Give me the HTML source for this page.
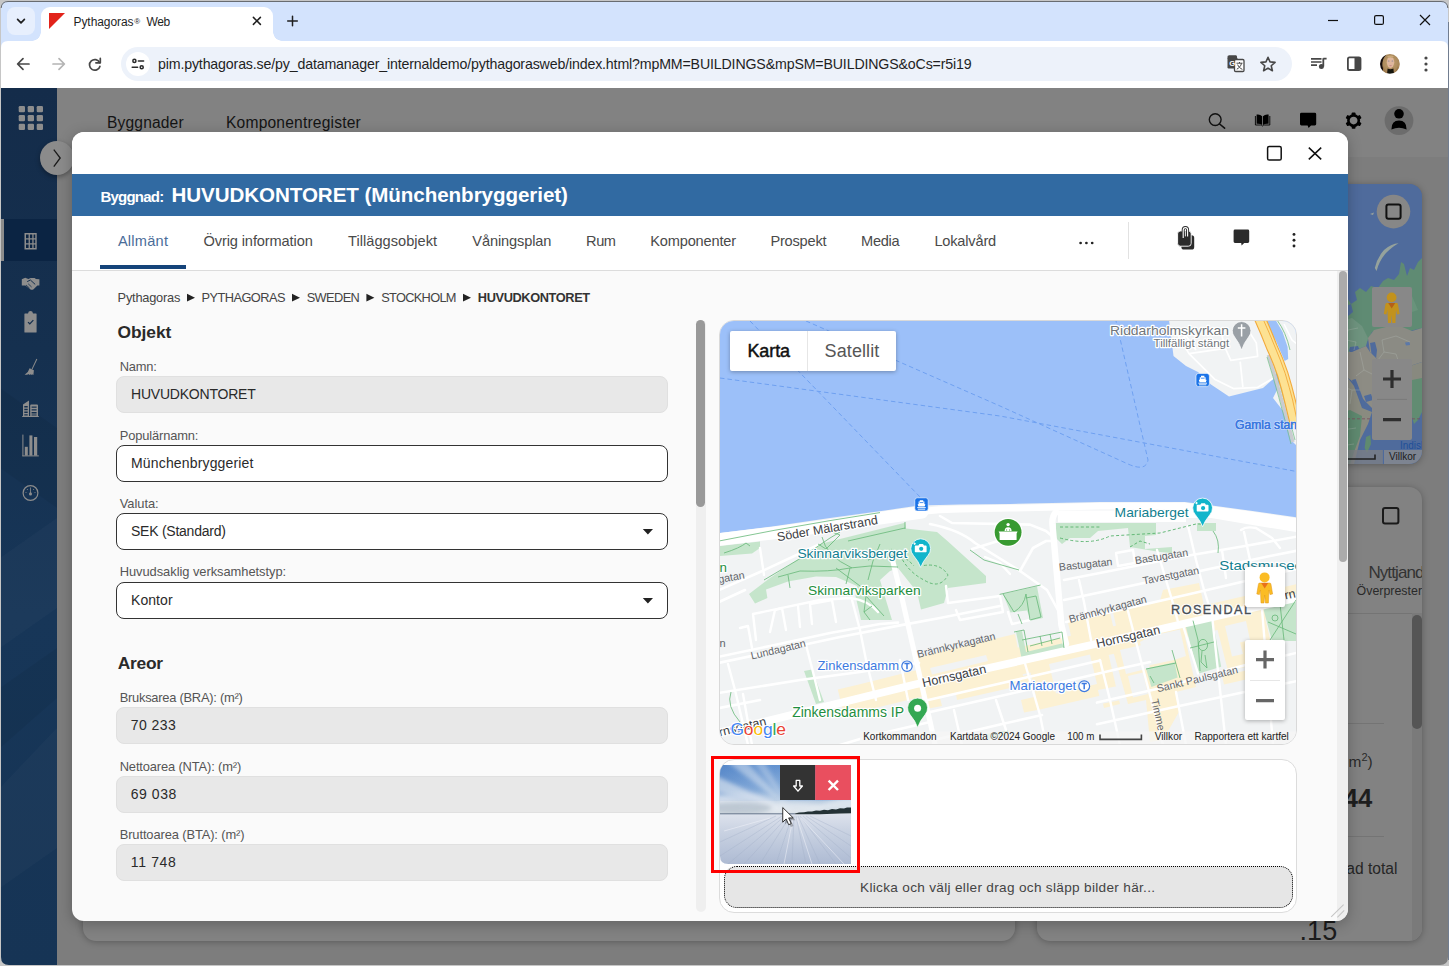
<!DOCTYPE html>
<html lang="sv">
<head>
<meta charset="utf-8">
<title>Pythagoras Web</title>
<style>
*{box-sizing:border-box;margin:0;padding:0}
html,body{width:1449px;height:966px;overflow:hidden;background:#808080;font-family:"Liberation Sans",sans-serif;color:#222}
.abs{position:absolute}
.t{position:absolute;white-space:nowrap;line-height:1}
#win{position:absolute;left:0;top:0;width:1449px;height:966px;overflow:hidden;background:#808080}
/* ---------- browser chrome ---------- */
#tabstrip{position:absolute;left:0;top:0;width:1449px;height:41px;background:#d3e3fd}
#tabsearch{position:absolute;left:7px;top:7px;width:28px;height:28px;border-radius:8px;background:#e7effd}
#tab{position:absolute;left:41px;top:7px;width:232px;height:34px;background:#fff;border-radius:9px 9px 0 0}
#tab:before,#tab:after{content:"";position:absolute;bottom:0;width:9px;height:9px}
#tab:before{left:-9px;background:radial-gradient(circle at 0 0,transparent 8.5px,#fff 9px)}
#tab:after{right:-9px;background:radial-gradient(circle at 100% 0,transparent 8.5px,#fff 9px)}
#tabtitle{position:absolute;left:73px;top:14px;font-size:12px;color:#1f1f1f;white-space:nowrap;letter-spacing:.1px}
#toolbar{position:absolute;left:0;top:41px;width:1449px;height:47px;background:#fff}
#urlpill{position:absolute;left:121px;top:47px;width:1171px;height:34px;border-radius:17px;background:#edf2fa}
#siteinfo{position:absolute;left:126px;top:52px;width:24px;height:24px;border-radius:12px;background:#fff}
#url{position:absolute;left:158px;top:56px;font-size:14px;color:#1f1f1f;white-space:nowrap;letter-spacing:.06px}
/* ---------- page behind modal ---------- */
#pgbg{position:absolute;left:0;top:88px;width:1449px;height:878px;background:#7d7d7d;overflow:hidden}
.card{position:absolute;background:#828282;border-radius:13px;box-shadow:0 1px 7px rgba(0,0,0,.28)}
#side{position:absolute;left:0;top:0;width:57px;height:878px;background:linear-gradient(180deg,#142c4a 0%,#15304f 30%,#173658 60%,#163455 100%)}
#side .act{position:absolute;left:0;top:131px;width:57px;height:42px;background:#0b2443}
#side .act:before{content:"";position:absolute;left:0;top:0;width:4px;height:42px;background:#8c8c8c}
#topnav{position:absolute;left:57px;top:0;width:1392px;height:69px;background:#828282}
.nav{position:absolute;top:26px;font-size:16px;color:#161616;white-space:nowrap}
/* ---------- modal ---------- */
#modal{position:absolute;left:72px;top:131.7px;width:1276px;height:789.4px;background:#fafafa;border-radius:12px;overflow:hidden;box-shadow:0 3px 14px rgba(0,0,0,.25)}
#mtop{position:absolute;left:0;top:0;width:1276px;height:43px;background:#fff}
#mtitle{position:absolute;left:0;top:42.3px;width:1276px;height:42px;background:#316aa2;color:#fff}
#mtabs{position:absolute;left:0;top:84.3px;width:1276px;height:55px;background:#fff;border-bottom:1px solid #dcdcdc}
#mc{position:absolute;left:0;top:0;width:0;height:0}
.fld{position:absolute;left:116px;width:552px;height:36.6px;border-radius:8px}
.fld.ro{background:#e8e8e8;border:1px solid #e0e0e0}
.fld.ed{background:#fff;border:1.3px solid #333}
</style>
</head>
<body>
<div id="win">

<!-- ================= BROWSER CHROME ================= -->
<div id="tabstrip"></div>
<div id="tabsearch"></div>
<div id="tab"></div>
<span class="t" style="left:73.5px;top:15.8px;font-size:12px;color:#1f1f1f;letter-spacing:-0.070px">Pythagoras</span><span class="t" style="left:134.2px;top:18.2px;font-size:8px;color:#1f1f1f">&#174;</span><span class="t" style="left:146.4px;top:15.8px;font-size:12px;color:#1f1f1f;letter-spacing:-0.356px">Web</span>
<div id="toolbar"></div>
<div id="urlpill"></div>
<div id="siteinfo"></div>
<span class="t" style="left:158.0px;top:56.6px;font-size:14.2px;color:#1f1f1f;letter-spacing:-0.157px">pim.pythagoras.se/py_datamanager_internaldemo/pythagorasweb/index.html?mpMM=BUILDINGS&amp;mpSM=BUILDINGS&amp;oCs=r5i19</span>


<!-- chrome icons -->
<svg class="abs" style="left:0;top:0" width="1449" height="88" viewBox="0 0 1449 88" fill="none">
  <!-- tab search chevron -->
  <path d="M17.6 19.4 L21 22.8 L24.4 19.4" stroke="#1f1f1f" stroke-width="1.7" stroke-linecap="round" stroke-linejoin="round"/>
  <!-- favicon -->
  <path d="M49 13 H65 L49 29 Z" fill="#e2231a"/>
  <!-- tab close -->
  <path d="M253.4 17.4 L260.4 24.4 M260.4 17.4 L253.4 24.4" stroke="#1f1f1f" stroke-width="1.5" stroke-linecap="round"/>
  <!-- new tab -->
  <path d="M292.5 16.2 V25.8 M287.7 21 H297.3" stroke="#1f1f1f" stroke-width="1.5" stroke-linecap="round"/>
  <!-- window controls -->
  <path d="M1328 20.5 H1338" stroke="#111" stroke-width="1.2"/>
  <rect x="1374.6" y="15.6" width="8.8" height="8.8" rx="1.5" stroke="#111" stroke-width="1.2"/>
  <path d="M1420 15 L1430 25 M1430 15 L1420 25" stroke="#111" stroke-width="1.2"/>
  <!-- back -->
  <path d="M29 64 H18.2 M23 58.7 L17.6 64 L23 69.3" stroke="#474747" stroke-width="1.7" stroke-linecap="round" stroke-linejoin="round"/>
  <!-- forward (disabled) -->
  <path d="M53 64 H63.8 M59 58.7 L64.4 64 L59 69.3" stroke="#b4b4b4" stroke-width="1.7" stroke-linecap="round" stroke-linejoin="round"/>
  <!-- reload -->
  <path d="M99.6 62.6 A5.3 5.3 0 1 0 99.9 66.4" stroke="#474747" stroke-width="1.7" stroke-linecap="round"/>
  <path d="M100.3 58.4 V62.8 H95.9" stroke="#474747" stroke-width="1.7" stroke-linecap="round" stroke-linejoin="round"/>
  <!-- site info (tune) -->
  <g stroke="#2a2a2a" stroke-width="1.5" stroke-linecap="round">
    <path d="M138.4 60.9 H143.6"/><circle cx="134.4" cy="60.9" r="1.55"/>
    <path d="M132.2 67.2 H137.6"/><circle cx="141.7" cy="67.2" r="1.55"/>
  </g>
  <!-- translate -->
  <g>
    <path d="M1229 55.5 h7.2 l1.5 3.5 h-10.2 a0 0 0 0 1 0 0 z" fill="#474747"/>
    <rect x="1227.5" y="55.5" width="9.5" height="13" rx="1.2" fill="#474747"/>
    <rect x="1234.5" y="59.5" width="9.5" height="12" rx="1.2" fill="#fff" stroke="#474747" stroke-width="1.3"/>
    <text x="1229.3" y="66" font-family="Liberation Sans" font-weight="bold" font-size="7.5" fill="#fff">G</text>
    <path d="M1236.5 63.2 H1242.5 M1239.5 62 V63.2 M1241.5 63.3 C1241 66 1239 68 1236.8 69.2 M1237.6 64.6 C1238.4 66.6 1240.2 68.4 1242.4 69.4" stroke="#474747" stroke-width="1"/>
  </g>
  <!-- star -->
  <g transform="translate(1268 64.2) scale(.92) translate(-1268 -64.2)"><path d="M1268 56.6 L1270.2 61.7 L1275.7 62.2 L1271.5 65.9 L1272.8 71.3 L1268 68.4 L1263.2 71.3 L1264.5 65.9 L1260.3 62.2 L1265.8 61.7 Z" stroke="#474747" stroke-width="1.7" stroke-linejoin="round"/></g>
  <!-- media -->
  <g stroke="#474747" stroke-width="1.7">
    <path d="M1311 58.8 H1321.5 M1311 62 H1321.5 M1311 65.2 H1317"/>
    <path d="M1323.3 58.2 V66.5 M1323.3 58.7 H1326.6" stroke-width="1.8"/>
  </g>
  <circle cx="1321.4" cy="66.6" r="2.5" fill="#474747"/>
  <!-- side panel -->
  <rect x="1347.9" y="57.4" width="12.6" height="12.6" rx="1.6" stroke="#474747" stroke-width="1.8"/>
  <rect x="1354.5" y="57.4" width="6" height="12.6" fill="#474747"/>
  <!-- avatar -->
  <defs><clipPath id="avc"><circle cx="1389.9" cy="63.9" r="9.9"/></clipPath>
  <radialGradient id="avh" cx="52%" cy="45%" r="60%"><stop offset="0" stop-color="#c3a373"/><stop offset=".6" stop-color="#a98759"/><stop offset="1" stop-color="#8a6840"/></radialGradient>
  <filter id="avb" x="-30%" y="-30%" width="160%" height="160%"><feGaussianBlur stdDeviation=".55"/></filter></defs>
  <g clip-path="url(#avc)"><g filter="url(#avb)">
    <rect x="1378" y="52" width="24" height="24" fill="url(#avh)"/>
    <path d="M1379 56 Q1383 53 1386 55 Q1381.6 60 1382.4 66 Q1383 71 1386 74 L1379 75 Z" fill="#120d0b"/>
    <path d="M1398.6 58 Q1401 62 1400 69 L1402 70 V56 Z" fill="#cfd2cc"/>
    <ellipse cx="1390.5" cy="62.3" rx="3.7" ry="5.6" fill="#dfb79e"/>
    <path d="M1387 56.6 Q1390.5 54.6 1394 56.6 Q1392 58.6 1390.4 57.6 Q1388.6 58.6 1387 56.6 Z" fill="#c9a878"/>
    <ellipse cx="1388.7" cy="61" rx=".9" ry=".6" fill="#8b8796"/><ellipse cx="1392.4" cy="61" rx=".9" ry=".6" fill="#8b8796"/>
    <ellipse cx="1390.5" cy="65.6" rx="1.4" ry=".55" fill="#c98f8c"/>
    <path d="M1387.6 68.6 Q1390.4 70 1393.4 68.6 L1394 74.6 H1387 Z" fill="#17120f"/>
    <path d="M1383 66 Q1385 72 1388 74 L1383 75 Z M1397.6 66 Q1396 72 1393.6 74 L1398 75 Z" fill="#9a7647"/>
  </g></g>
  <!-- menu dots -->
  <circle cx="1426" cy="58" r="1.6" fill="#474747"/><circle cx="1426" cy="64" r="1.6" fill="#474747"/><circle cx="1426" cy="70" r="1.6" fill="#474747"/>
</svg>

<!-- ================= PAGE ================= -->
<div id="pgbg">
  <div id="side"><div class="act"></div>
  <svg class="abs" style="left:0;top:0" width="57" height="878" viewBox="0 0 57 878"><path d="M0 470 L57 430 V520 L0 560 Z M0 700 L57 640 V760 L0 800 Z" fill="#fff" opacity=".022"/><path d="M0 300 L57 340 V420 L0 380 Z M0 600 L57 560 V610 L0 660 Z" fill="#000" opacity=".05"/></svg>
  <svg class="abs" style="left:0;top:0" width="57" height="500" viewBox="0 88 57 500" fill="#8d8d8d">
    <!-- apps grid -->
    <g>
      <rect x="18.7" y="106" width="6.3" height="6.3" rx="1.3"/><rect x="27.7" y="106" width="6.3" height="6.3" rx="1.3"/><rect x="36.7" y="106" width="6.3" height="6.3" rx="1.3"/>
      <rect x="18.7" y="114.9" width="6.3" height="6.3" rx="1.3"/><rect x="27.7" y="114.9" width="6.3" height="6.3" rx="1.3"/><rect x="36.7" y="114.9" width="6.3" height="6.3" rx="1.3"/>
      <rect x="18.7" y="123.8" width="6.3" height="6.3" rx="1.3"/><rect x="27.7" y="123.8" width="6.3" height="6.3" rx="1.3"/><rect x="36.7" y="123.8" width="6.3" height="6.3" rx="1.3"/>
    </g>
    <!-- building (active) -->
    <path fill-rule="evenodd" d="M24.5 233 H36.7 V249.5 H24.5 Z M26 234.6 V238.2 H28.6 V234.6 Z M29.9 234.6 V238.2 H32.3 V234.6 Z M33.6 234.6 V238.2 H35.3 V234.6 Z M26 239.6 V243.2 H28.6 V239.6 Z M29.9 239.6 V243.2 H32.3 V239.6 Z M33.6 239.6 V243.2 H35.3 V239.6 Z M26 244.6 V248 H28.6 V244.6 Z M29.9 244.6 V248 H32.3 V244.6 Z M33.6 244.6 V248 H35.3 V244.6 Z"/>
    <!-- handshake -->
    <path d="M21.8 279.2 L25.2 277.8 L28.4 279 L30.6 278 L34.6 278 L36 279 L39.4 279.2 L39.4 285.4 L37.4 285.6 L33.6 289.2 Q31.8 290.4 30.2 289.2 L25.4 285.6 L21.8 285.4 Z"/>
    <path d="M27.2 281.6 L30.4 280 L33 282.4 L35.2 284.4" stroke="#15304f" stroke-width="1" fill="none"/>
    <path d="M26 285 L29.6 288.2 M28.2 283.8 L31.6 287" stroke="#15304f" stroke-width=".8" fill="none"/>
    <!-- clipboard -->
    <path fill-rule="evenodd" d="M25 313.4 H28 Q28.3 311 30.5 311 Q32.7 311 33 313.4 H36 Q36.6 313.4 36.6 314 V332 Q36.6 332.6 36 332.6 H25 Q24.4 332.6 24.4 332 V314 Q24.4 313.4 25 313.4 Z M27.6 322.6 L29.8 324.8 L33.8 320.6 L32.9 319.7 L29.8 322.9 L28.5 321.7 Z"/>
    <!-- broom -->
    <path d="M36.4 358.8 L37.3 359.2 L32.4 369.6 L31.5 369.2 Z"/>
    <path d="M29.6 368.2 L33.9 370.2 L33.4 375 L31.9 374.2 L31.6 375 L30.1 374.2 L29.6 375 L28.2 374 L27.4 374.8 L24.6 374.8 Q28.4 372.6 29.6 368.2 Z"/>
    <!-- city -->
    <path fill-rule="evenodd" d="M23 416.6 V404.4 L29 400.4 V416.6 Z M24.3 406 V407.4 H27.7 V406 Z M24.3 408.8 V410.2 H27.7 V408.8 Z M24.3 411.6 V413 H27.7 V411.6 Z M24.3 414.2 V415.4 H27.7 V414.2 Z"/>
    <path fill-rule="evenodd" d="M30.2 416.6 V405.4 Q30.2 404.4 31.2 404.4 H37 Q38 404.4 38 405.4 V416.6 Z M31.6 406.4 V407.8 H36.6 V406.4 Z M31.6 409.2 V410.6 H36.6 V409.2 Z M31.6 412 V413.4 H36.6 V412 Z M31.6 414.6 V415.6 H36.6 V414.6 Z"/>
    <rect x="22.2" y="416" width="16.6" height="1"/>
    <!-- bar chart -->
    <rect x="22.4" y="434.6" width="1" height="21.6"/><rect x="22.4" y="455.4" width="16.4" height="1"/>
    <rect x="24.8" y="446.8" width="3" height="8.8"/><rect x="29.4" y="435.4" width="3" height="20.2"/><rect x="34" y="437" width="3.2" height="18.6"/>
    <!-- gauge -->
    <circle cx="30.5" cy="493" r="7.4" fill="none" stroke="#8d8d8d" stroke-width="1.2"/>
    <path d="M30.1 487.4 H30.9 V492.2 Q32 492.8 32 494 A1.5 1.5 0 0 1 29 494 Q29 492.8 30.1 492.2 Z"/>
    <circle cx="26" cy="492.6" r=".5"/><circle cx="35" cy="492.6" r=".5"/><circle cx="27.4" cy="489.4" r=".5"/><circle cx="33.6" cy="489.4" r=".5"/>
  </svg>
</div>
  <div id="topnav">
  </div>

  <!-- header icons -->
  <svg class="abs" style="left:1190px;top:0" width="259" height="70" viewBox="1190 88 259 70" fill="#000">
    <circle cx="1215.2" cy="119.6" r="5.9" fill="none" stroke="#111" stroke-width="1.4"/>
    <path d="M1219.6 124 L1224.6 128.2" stroke="#111" stroke-width="1.6" stroke-linecap="round"/>
    <!-- book -->
    <path d="M1256.6 114.6 Q1260 114 1262.2 116.2 V125 Q1260 123.4 1256.6 123.8 Z M1268.6 114.6 Q1265.2 114 1263 116.2 V125 Q1265.2 123.4 1268.6 123.8 Z"/>
    <path d="M1255.4 116 V125 H1260.6 Q1262 125 1262.6 126 Q1263.2 125 1264.6 125 H1269.8 V116" fill="none" stroke="#000" stroke-width=".9"/>
    <!-- chat -->
    <path d="M1301.4 112.8 H1314.8 Q1316.2 112.8 1316.2 114.2 V124 Q1316.2 125.4 1314.8 125.4 H1311 L1308.6 128 L1307.6 125.4 H1301.4 Q1300 125.4 1300 124 V114.2 Q1300 112.8 1301.4 112.8 Z"/>
    <!-- gear -->
    <g transform="translate(1353.6 120.6)">
      <circle r="5.2" fill="none" stroke="#000" stroke-width="2.6"/>
      <g id="gt"><rect x="-1.9" y="-8.2" width="3.8" height="3.4" rx=".8"/></g>
      <use href="#gt" transform="rotate(60)"/><use href="#gt" transform="rotate(120)"/><use href="#gt" transform="rotate(180)"/><use href="#gt" transform="rotate(240)"/><use href="#gt" transform="rotate(300)"/>
    </g>
    <!-- user -->
    <circle cx="1399" cy="120.6" r="14.4" fill="#6c6c6c"/>
    <circle cx="1399" cy="113.8" r="4.8"/>
    <path d="M1391.4 129.4 Q1391.4 120.6 1399 120.6 Q1406.6 120.6 1406.6 129.4 Q1399 126 1391.4 129.4 Z"/>
  </svg>
  <!-- sidebar toggle -->
  <div class="abs" style="left:40px;top:53px;width:34px;height:34px;border-radius:17px;background:#8b8b8b;box-shadow:0 2px 5px rgba(0,0,0,.35)"></div>
  <svg class="abs" style="left:40px;top:53px" width="34" height="34" viewBox="0 0 34 34" fill="none"><path d="M13.8 8.6 L20.2 17 L13.8 25.6" stroke="#1a1a1a" stroke-width="1.3"/></svg>

  <!-- cards behind the modal -->
  <div class="card" style="left:83px;top:400px;width:932px;height:453px"></div>
  <div class="card" id="card2" style="left:1037px;top:399px;width:385px;height:454px;overflow:hidden">
    <div class="abs" style="left:375px;top:126px;width:10px;height:330px;background:#7a7a7a"></div>
    <div class="abs" style="left:375px;top:128px;width:9.6px;height:114px;border-radius:5px;background:#555"></div>
    <div class="abs" style="left:300px;top:126px;width:75px;height:1px;background:#747474"></div>
    <div class="abs" style="left:300px;top:236px;width:47px;height:1px;background:#747474"></div>
    <div class="abs" style="left:300px;top:349px;width:47px;height:1px;background:#747474"></div>
    <svg class="abs" style="left:344px;top:19px" width="20" height="20" viewBox="0 0 20 20"><rect x="2" y="2" width="15.4" height="15.4" rx="2" fill="none" stroke="#1a1a1a" stroke-width="2"/></svg>
  </div>
  <div class="card" id="mapcard" style="left:1037px;top:96px;width:385px;height:280px;overflow:hidden;background:#4f6b9c">
    <svg class="abs" style="left:300px;top:0" width="85" height="280" viewBox="1337 184 85 280" font-family="Liberation Sans, sans-serif">
      <rect x="1337" y="184" width="85" height="280" fill="#4f6b9c"/>
      <!-- islands -->
      <path d="M1370 214 L1374 212.4 L1373 215 Z" fill="#97a19c"/>
      <path d="M1398.6 243.2 Q1393 246 1386 253 Q1379 261 1376.6 271 L1374.8 268 Q1377 258 1384 250 Q1391 243.6 1398.6 243.2 Z" fill="#95a29c"/>
      <!-- Russia / north eurasia green -->
      <path d="M1422 258 L1418 262 L1414 270 L1410 268 L1407 276 L1404 264 L1401 262 L1399 274 L1394 280 L1388 278 L1383 281 L1378 288 L1371 286 L1366 292 L1360 288 L1355 292 L1357 300 L1351 304 L1346 296 L1337 298 V352 L1352 352 L1366 344 L1372 332 L1384 328 L1398 326 L1410 331 L1422 328 Z" fill="#5f8b73"/>
      <path d="M1384 296 L1398 290 L1412 296 L1418 310 L1400 316 L1386 310 Z" fill="#6b957d" opacity=".8"/>
      <path d="M1346 306 L1351 304 L1353 312 L1348 316 Z M1340 318 L1346 316 L1347 326 L1341 328 Z" fill="#4f6b9c"/>
      <!-- europe (lighter green-grey) -->
      <path d="M1337 322 L1352 318 L1362 326 L1368 338 L1366 346 L1352 352 L1337 352 Z" fill="#6f947f"/>
      <!-- central asia tan -->
      <path d="M1368 338 L1374 330 L1386 327 L1400 326 L1412 331 L1422 328 V362 L1410 366 L1398 360 L1388 364 L1378 360 L1370 352 Z" fill="#8b8b84"/>
      <path d="M1405 342.6 L1409.6 342 L1410 345 L1406 345.6 Z" fill="#5b78a8"/>
      <!-- seas -->
      <path d="M1350 347 L1358 346 L1360 351 L1353 354 L1349 351 Z" fill="#4f6b9c"/>
      <path d="M1370 343 L1375 342 L1377 350 L1376 359 L1372 358 L1371 350 Z" fill="#4f6b9c"/>
      <!-- china / south asia -->
      <path d="M1378 360 L1388 364 L1398 360 L1410 366 L1422 362 V382 L1412 380 L1404 388 L1394 384 L1384 388 L1378 378 Z" fill="#88897f"/>
      <path d="M1412 380 L1422 378 V412 L1418 420 L1414 424 L1410 410 L1404 396 L1404 388 Z" fill="#618c72"/>
      <!-- middle east -->
      <path d="M1337 352 L1352 352 L1366 346 L1370 352 L1378 360 L1378 378 L1384 388 L1380 400 L1372 408 L1362 398 L1356 384 L1348 378 L1337 378 Z" fill="#8d8c84"/>
      <path d="M1352 380 L1355.6 379 L1365 404 L1362 406 Z" fill="#4f6b9c"/>
      <path d="M1364 396 L1371 394 L1373 400 L1366 402 Z" fill="#4f6b9c"/>
      <!-- africa -->
      <path d="M1337 378 L1348 378 L1354 386 L1362 408 L1372 412 L1368 424 L1360 440 L1354 464 H1337 Z" fill="#8a8b80"/>
      <path d="M1337 414 L1350 410 L1362 416 L1360 436 L1354 452 L1350 464 H1337 Z" fill="#5f8a70"/>
      <path d="M1366 437 L1370.4 435 L1371 444 L1367 453 L1364.6 448 Z" fill="#5f8a70"/>
      <!-- borders -->
      <g stroke="#b4bcb6" stroke-width=".5" fill="none" opacity=".65">
        <path d="M1340 326 L1348 330 L1346 340 L1356 342 L1354 350 M1348 330 L1358 328 M1346 340 L1338 342"/>
        <path d="M1378 360 L1384 352 L1396 354 L1398 360 M1384 352 L1382 340 L1396 336 L1410 342 M1360 352 L1364 370 L1372 374 L1378 370"/>
        <path d="M1340 386 L1352 390 L1350 404 M1352 390 L1360 390 M1342 430 L1356 428 M1340 446 L1354 444 M1344 404 L1346 420 M1364 370 L1356 376"/>
      </g>
      <path d="M1337 418.8 H1422" stroke="#7b4f5e" stroke-width=".8" stroke-dasharray="3 2"/>
      <!-- controls -->
      <circle cx="1393.5" cy="211.6" r="16.8" fill="#878787"/>
      <rect x="1386.4" y="204.6" width="14.2" height="14.2" rx="2" fill="none" stroke="#111" stroke-width="2"/>
      <rect x="1372" y="287" width="40" height="40" rx="2" fill="#888"/>
      <circle cx="1391.6" cy="297.4" r="4.9" fill="#c2921d"/>
      <path d="M1385.4 304.4 Q1385.4 303 1387 303 H1396.4 Q1398 303 1398 304.4 L1399.6 314 L1397 314.6 L1396 310 L1395.4 323 H1392.4 L1391.7 315 L1391 323 H1388 L1387.4 310 L1386.4 314.6 L1383.8 314 Z" fill="#c2921d"/>
      <path d="M1388.2 303 L1391.7 308.6 L1395.2 303 Z" fill="#b55f17"/>
      <rect x="1372" y="359" width="40" height="81" rx="2" fill="#888"/>
      <path d="M1377 399.4 H1407" stroke="#7a7a7a" stroke-width="1"/>
      <path d="M1383 379 H1401 M1392 370 V388 M1383 419.6 H1401" stroke="#2e2e2e" stroke-width="3.2"/>
      <!-- bottom attribution -->
      <rect x="1337" y="450" width="46" height="14" fill="#7c7f86" opacity=".8"/>
      <rect x="1384" y="450" width="38" height="14" fill="#828790" opacity=".9"/>
      <path d="M1383.4 450 V464" stroke="#4f6b9c" stroke-width="1"/>
      <path d="M1345 459 H1375 V454.6" stroke="#222" stroke-width="1.6" fill="none"/>
      <text x="1389" y="460" font-size="10" fill="#1c1c1c" textLength="27.2" lengthAdjust="spacingAndGlyphs">Villkor</text>
      <text x="1400" y="449.2" font-size="10" fill="#1f4f98" textLength="26" lengthAdjust="spacingAndGlyphs">Indisk</text>
    </svg>
  </div>
</div>

<div id="pt" class="abs" style="left:0;top:0">
  <span class="t" style="left:107.0px;top:114.8px;font-size:15.6px;color:#141414;letter-spacing:0.151px">Byggnader</span>
  <span class="t" style="left:226.0px;top:114.8px;font-size:15.6px;color:#141414;letter-spacing:0.190px">Komponentregister</span>
  <span class="t" style="left:1368.4px;top:563.6px;font-size:17px;color:#333;letter-spacing:-0.903px;clip-path:inset(-6px 0 -6px 0);width:53.6px">Nyttjande</span>
  <span class="t" style="left:1356.6px;top:585.3px;font-size:12.4px;color:#2a2a2a;clip-path:inset(-6px 0 -6px 0);width:65.4px">Överprestera</span>
  <span class="t" style="left:1348.6px;top:753.6px;font-size:15.4px;color:#2a2a2a">m<span style="font-size:11px;position:relative;top:-6px">2</span>)</span>
  <span class="t" style="left:1329.6px;top:785.9px;font-size:25.6px;font-weight:bold;color:#1e1e1e">144</span>
  <span class="t" style="left:1337.6px;top:861.2px;font-size:15.6px;color:#262626">nad total</span>
  <span class="t" style="left:1299.4px;top:917.7px;font-size:27px;color:#1c1c1c;letter-spacing:0.151px">.15</span>
</div>

<!-- ================= MODAL ================= -->
<div id="modal">
  <div id="mtop"></div>
  <div id="mtitle"></div>
  <div id="mtabs"></div>
  <div class="abs" style="left:1265px;top:139.3px;width:11px;height:651px;background:#efefef"></div>
  <div class="abs" style="left:1266.5px;top:139.8px;width:8px;height:291px;border-radius:4px;background:#ababab"></div>
</div>
<!-- modal content in window coordinates -->
<div id="mc">
  <svg class="abs" style="left:1060px;top:131px" width="290" height="140" viewBox="1060 131 290 140" fill="none">
    <rect x="1267.6" y="146.4" width="13.6" height="13.6" rx="1.6" stroke="#111" stroke-width="1.5"/>
    <path d="M1308.8 147.6 L1321.2 159.4 M1321.2 147.6 L1308.8 159.4" stroke="#111" stroke-width="1.5"/>
    <circle cx="1080.6" cy="243" r="1.35" fill="#222"/><circle cx="1086.4" cy="243" r="1.35" fill="#222"/><circle cx="1092.2" cy="243" r="1.35" fill="#222"/>
    <path d="M1128.5 222 V259" stroke="#e2e2e2" stroke-width="1"/>
    <!-- attachments -->
    <rect x="1181.4" y="235.2" width="12.8" height="14.4" rx="2.6" fill="#2b2b2b"/>
    <rect x="1177.6" y="231" width="13.6" height="15.2" rx="2.8" fill="#2b2b2b" stroke="#fff" stroke-width=".9"/>
    <path d="M1183.2 238 V230 Q1183.2 227.6 1185.4 227.6 Q1187.6 227.6 1187.6 230 V236.6" stroke="#2b2b2b" stroke-width="3"/>
    <path d="M1183.2 238 V230 Q1183.2 227.6 1185.4 227.6 Q1187.6 227.6 1187.6 230 V236.6" stroke="#fff" stroke-width="1.1"/>
    <path d="M1185.4 231.4 V236.4" stroke="#fff" stroke-width=".9"/>
    <!-- chat -->
    <path d="M1235 229.6 H1247.8 Q1249.2 229.6 1249.2 231 V241.6 Q1249.2 243 1247.8 243 H1244.2 L1241.6 245.6 L1241.2 243 H1235 Q1233.6 243 1233.6 241.6 V231 Q1233.6 229.6 1235 229.6 Z" fill="#2b2b2b"/>
    <circle cx="1294" cy="234.4" r="1.45" fill="#222"/><circle cx="1294" cy="240.2" r="1.45" fill="#222"/><circle cx="1294" cy="246" r="1.45" fill="#222"/>
  </svg>
  <span class="t" style="left:100.4px;top:188.7px;font-size:15px;font-weight:bold;color:#fff;letter-spacing:-0.771px">Byggnad:</span>
  <span class="t" style="left:171.4px;top:185.1px;font-size:20.6px;font-weight:bold;color:#fff;letter-spacing:-0.074px">HUVUDKONTORET (Münchenbryggeriet)</span>
  <!-- tabs -->
  <span class="t" style="left:117.9px;top:233.9px;font-size:14.6px;color:#4a6d99;letter-spacing:0.233px">Allmänt</span>
  <span class="t" style="left:203.5px;top:233.9px;font-size:14.6px;color:#4a4a4a;letter-spacing:-0.113px">Övrig information</span>
  <span class="t" style="left:348.0px;top:233.9px;font-size:14.6px;color:#4a4a4a;letter-spacing:0.035px">Tilläggsobjekt</span>
  <span class="t" style="left:472.3px;top:233.9px;font-size:14.6px;color:#4a4a4a;letter-spacing:-0.122px">Våningsplan</span>
  <span class="t" style="left:586.0px;top:233.9px;font-size:14.6px;color:#4a4a4a;letter-spacing:-0.404px">Rum</span>
  <span class="t" style="left:650.3px;top:233.9px;font-size:14.6px;color:#4a4a4a;letter-spacing:-0.184px">Komponenter</span>
  <span class="t" style="left:770.4px;top:233.9px;font-size:14.6px;color:#4a4a4a;letter-spacing:-0.199px">Prospekt</span>
  <span class="t" style="left:861.0px;top:233.9px;font-size:14.6px;color:#4a4a4a;letter-spacing:-0.270px">Media</span>
  <span class="t" style="left:934.4px;top:233.9px;font-size:14.6px;color:#4a4a4a;letter-spacing:-0.187px">Lokalvård</span>
  <div class="abs" style="left:100px;top:265px;width:86px;height:4px;background:#15447a"></div>
  <!-- breadcrumb -->
  <span class="t" style="left:117.6px;top:292.4px;font-size:12.8px;color:#444;letter-spacing:-0.223px">Pythagoras</span>
  <span class="t" style="left:201.4px;top:292.4px;font-size:12.8px;color:#444;letter-spacing:-0.529px">PYTHAGORAS</span>
  <span class="t" style="left:306.7px;top:292.4px;font-size:12.8px;color:#444;letter-spacing:-0.612px">SWEDEN</span>
  <span class="t" style="left:381.2px;top:292.4px;font-size:12.8px;color:#444;letter-spacing:-0.692px">STOCKHOLM</span>
  <span class="t" style="left:477.8px;top:292.4px;font-size:12.8px;font-weight:bold;color:#333;letter-spacing:-0.391px">HUVUDKONTORET</span>
  <svg class="abs" style="left:180px;top:290px" width="300" height="16" viewBox="180 290 300 16" fill="#222">
    <path d="M187 293.8 L195 297.7 L187 301.6 Z M292 293.8 L300 297.7 L292 301.6 Z M366.4 293.8 L374.4 297.7 L366.4 301.6 Z M463 293.8 L471 297.7 L463 301.6 Z"/>
  </svg>
  <!-- left form -->
  <span class="t" style="left:117.6px;top:323.8px;font-size:17.4px;font-weight:bold;color:#2a2a2a;letter-spacing:-0.087px">Objekt</span>
  <span class="t" style="left:119.7px;top:361.1px;font-size:12.9px;color:#555;letter-spacing:-0.194px">Namn:</span>
  <div class="fld ro" style="top:376px"></div>
  <span class="t" style="left:131.0px;top:387.1px;font-size:14px;color:#2a2a2a;letter-spacing:-0.209px">HUVUDKONTORET</span>
  <span class="t" style="left:119.7px;top:429.6px;font-size:12.9px;color:#555;letter-spacing:-0.139px">Populärnamn:</span>
  <div class="fld ed" style="top:445px"></div>
  <span class="t" style="left:131.0px;top:456.1px;font-size:14px;color:#2a2a2a;letter-spacing:0.161px">Münchenbryggeriet</span>
  <span class="t" style="left:119.7px;top:498.1px;font-size:12.9px;color:#555;letter-spacing:-0.027px">Valuta:</span>
  <div class="fld ed" style="top:513px"></div>
  <span class="t" style="left:131.0px;top:524.1px;font-size:14px;color:#2a2a2a;letter-spacing:-0.247px">SEK (Standard)</span>
  <span class="t" style="left:119.7px;top:566.1px;font-size:12.9px;color:#555;letter-spacing:-0.047px">Huvudsaklig verksamhetstyp:</span>
  <div class="fld ed" style="top:582.4px"></div>
  <span class="t" style="left:131.0px;top:592.9px;font-size:14px;color:#2a2a2a;letter-spacing:0.058px">Kontor</span>
  <svg class="abs" style="left:640px;top:520px" width="20" height="90" viewBox="640 520 20 90" fill="#222"><path d="M642.8 529 H653 L647.9 534.6 Z M642.8 598 H653 L647.9 603.6 Z"/></svg>
  <span class="t" style="left:117.7px;top:655.3px;font-size:17.4px;font-weight:bold;color:#2a2a2a;letter-spacing:-0.238px">Areor</span>
  <span class="t" style="left:119.7px;top:692.4px;font-size:12.9px;color:#555;letter-spacing:-0.257px">Bruksarea (BRA): (m²)</span>
  <div class="fld ro" style="top:707.3px"></div>
  <span class="t" style="left:130.8px;top:717.9px;font-size:14px;color:#2a2a2a;letter-spacing:0.429px">70 233</span>
  <span class="t" style="left:119.7px;top:760.7px;font-size:12.9px;color:#555;letter-spacing:-0.142px">Nettoarea (NTA): (m²)</span>
  <div class="fld ro" style="top:776px"></div>
  <span class="t" style="left:130.8px;top:786.7px;font-size:14px;color:#2a2a2a;letter-spacing:0.529px">69 038</span>
  <span class="t" style="left:119.7px;top:829.4px;font-size:12.9px;color:#555;letter-spacing:-0.112px">Bruttoarea (BTA): (m²)</span>
  <div class="fld ro" style="top:844.3px"></div>
  <span class="t" style="left:130.8px;top:855.1px;font-size:14px;color:#2a2a2a;letter-spacing:0.636px">11 748</span>
  <!-- ============ MAP ============ -->
  <div class="abs" id="mapbox" style="left:719px;top:320px;width:578px;height:425px;border-radius:15px;overflow:hidden;border:1px solid #d9d9d9;background:#f1f3f4">
  <svg class="abs" style="left:-1px;top:-1px" width="578" height="425" viewBox="719 320 578 425" font-family="Liberation Sans, sans-serif">
    <rect x="719" y="320" width="578" height="425" fill="#f1f3f4"/>
    <!-- water -->
    <path d="M719 320 H1297 V517.5 L1249 510.5 L1212 505.6 L1185 502 L1100 502 L1010 504 L960 504.6 L919 505.6 L885 510.4 L830 518 L774 526.2 L719 533.2 Z" fill="#9cc0f9"/>
    <!-- Riddarholmen + Gamla stan land -->
    <path d="M1169 320 L1173.5 356 L1186 366 L1198 372 L1211 384.5 L1229 396.5 L1263 388 L1272 380 L1277 372 L1268 345 L1257 320 Z" fill="#f1f3f4"/>
    <path d="M1266 320 H1297 V446 L1291 440 L1284 412 L1273 398 L1278 388 L1281 376 L1275 352 Z" fill="#f1f3f4"/>
    <path d="M1176 332 L1189 353.6 L1214.6 379.2 L1233.4 388.6 L1257.7 387.3 L1273.8 377.9 M1189 353.6 L1225.4 348.3 L1230.8 360.4 L1257.7 356.3 L1256.3 342.9 L1250 333 M1225.4 348.3 L1222 336 M1180 340 L1186 336 L1196 350" fill="none" stroke="#fff" stroke-width="1.7" stroke-linejoin="round"/>
    <path d="M1240.2 361.7 L1242.9 387.3" stroke="#fff" stroke-width="1.7" fill="none"/>
    <!-- water wedge right of Centralbron -->
    <path d="M1265 320 L1275.6 320 L1282.6 332 L1287.6 347 L1288.2 359 L1284.6 361 L1276 341 Z" fill="#9cc0f9"/>
    <path d="M1277 320 Q1286 332 1290 350" stroke="#6dbb7f" stroke-width=".8" fill="none"/>
    <path d="M1284 324 L1292 340 L1297 344" stroke="#fff" stroke-width="1.6" fill="none"/>
    <!-- railway -->
    <path d="M1268.4 355 Q1280 392 1293 442" stroke="#c9ccd0" stroke-width="3.4" fill="none"/>
    <path d="M1267 357 Q1278.6 394 1291 444 M1270.6 354 Q1282 390 1295 440" stroke="#6dbb7f" stroke-width=".7" fill="none"/>
    <!-- Centralbron -->
    <path d="M1259.7 318 Q1266 332 1271.8 346.9 Q1278 360 1282.6 373.8 Q1287 388 1290 400.8 L1295.6 424" stroke="#f2a93b" stroke-width="11.8" fill="none"/>
    <path d="M1259.7 318 Q1266 332 1271.8 346.9 Q1278 360 1282.6 373.8 Q1287 388 1290 400.8 L1295.6 424" stroke="#fde293" stroke-width="9.6" fill="none"/>
    <path d="M1262.6 318 Q1269 332 1274.6 346 Q1280.6 360 1285.2 373.4 Q1289.6 388 1292.6 400 L1297 420" stroke="#f2a93b" stroke-width=".9" fill="none"/>
    <!-- yellow commercial -->
    <path d="M841 702.7 L860 698 L913.8 684.7 L1040 656.5 L1110 640.8 L1244.5 609.8 L1300 597.2" stroke="#fcf1d3" stroke-width="27" fill="none"/>
    <g fill="#fcf1d3">
      <path d="M914 658 L1015 634 L1019 654 L917.6 678.6 Z"/>
      <path d="M922 690 L1021 666.4 L1023 676 L1030 674.6 L1032 683 L957 700 L956 694 L940 698 L942 706 L926 709 Z"/>
      <path d="M841 689.6 L913 672.4 L914 678 L842 695.4 Z"/>
      <path d="M842.6 708 L914 691.4 L915.4 697 L866 708.6 L867 713 L850 716 L849 712.6 L843.6 713.6 Z"/>
      <path d="M1028 661.6 L1106 643.6 L1120 704 L1104 708 L1101 695.6 L1040 709.4 L1024 712.6 L1021 700 L1036 696.6 Z"/>
      <path d="M1068 622.4 L1110 612.6 L1113.6 628.6 L1071.6 638.4 Z"/>
      <path d="M1110 640 L1182 624 L1196 687 L1176 692 L1180 710 L1163 740 L1150 742 L1146 700 L1128 704 Z"/>
      <path d="M1113 612 L1160 600.6 L1163 590 L1199 583 L1206 615 L1118 635 Z"/>
      <path d="M1214 616 L1262 605 L1275 660 L1228 671 Z"/>
      <path d="M1222 676 L1246 670.6 L1248 679 L1224 684.4 Z"/>
      <path d="M1262 604 L1297 596 V612 L1266 620 Z"/>
    </g>
    <g fill="#f1f3f4">
      <path d="M1049 664 L1090 654.6 L1097 684 L1056 693.6 Z"/>
      <path d="M1120 650 L1144 644.6 L1150 668 L1126 674 Z"/>
      <path d="M1151 636 L1180 629.6 L1186 656 L1174 660 L1146 666 L1140 642 Z"/>
      <path d="M1098 690 L1118 686 L1121 700 L1101 704 Z"/>
      <path d="M1128 676 L1143 672.6 L1148 694 L1133 697.4 Z"/>
      <path d="M1225 626 L1246 621 L1250 640 L1240 642.4 L1243 654 L1232 656.6 Z"/>
      <path d="M930 668 L986 655 L988 661 L932 674.4 Z"/>
    </g>
    <!-- parks -->
    <g fill="#c5e5cb">
      <path d="M719 546 L760 541.4 L760 548 L752 553.4 L719 556 Z"/>
      <path d="M818 544.6 L905 522.8 L906 528.6 L937 532 L948 541.6 L986 576 L986 583 L948 588 L944 603 L921 609.6 L917 592 L898 568 L890 571 L880 580 L885 597 L892 620 L861 620 L855.5 596 L857 586 L836 577 L816 576.4 L788 581.6 L766 589.4 L767.4 598 L755 603.6 L749 594 L770 578 L800 558 Z"/>
      <path d="M1056 523 H1156 V535 L1145 536 V549 L1172 547 V553 L1160 552 L1130 547 L1128 528 L1098 531 L1090 538 H1070 L1062 544 L1056 538 Z"/>
      <path d="M1197 523 H1216 V531 H1197 Z"/>
      <path d="M1003 594 L1037 586.6 L1043 618 L1031 620.6 L1027 610.4 L1010.5 612.4 Z"/>
      <path d="M1184.8 622.6 L1212 616.4 L1221.2 666.8 L1198 673.8 Z"/>
      <path d="M1146 668.4 L1174.6 662.2 L1177.6 677.6 L1151.4 687 Z"/>
      <path d="M1262 604 L1297 597 V641 L1272 641 Z"/>
      <path d="M1016 632 L1022 631 L1026 652 L1064 643 L1066 651 L1022 660 Z"/>
      <path d="M986.6 734 L1008 730.6 L1009 735.6 L988 739.4 Z"/>
      <path d="M804 671 L812 669.4 L824 702 L816 704 Z"/>
    </g>
    <!-- roads -->
    <g stroke="#fff" fill="none" stroke-linecap="round" stroke-linejoin="round">
      <!-- Soder Malarstrand -->
      <path d="M713 540.2 L774 532.9 L830 525.4 L885 517.6 L922 512.2" stroke-width="12.6"/>
      <path d="M915 513 Q930 509.6 960 509 L1010 508.2 L1100 506.2 L1185 506 L1212 509.6 L1249 514.6 L1300 522" stroke-width="6.8"/>
      <path d="M1058 516.4 L1186 516.2" stroke-width="11.6" stroke-linecap="butt"/>
      <path d="M1180 512.4 L1212 512.4 L1249 518.6 L1300 527" stroke-width="11.4"/>
      <!-- Hornsgatan -->
      <path d="M713 734.3 L860 698 L913.8 684.7 L1040 656.5 L1110 640.8 L1244.5 609.8 L1300 597.2" stroke-width="7.8"/>
      <!-- big cross road -->
      <path d="M1056 512 Q1052 516 1052.4 524 L1061.4 625 L1066 644" stroke-width="6.4"/>
      <path d="M893 562 L902.4 600 L915.6 658 L929.7 720 L935.6 747" stroke-width="5.2"/>
      <!-- parallel streets -->
      <g stroke-width="2.6">
        <path d="M715 657.6 L770 646 L830 633 L880 624 L898 622.6"/>
        <path d="M715 663.6 L775 651 L840 637 L900 625.4 L940 618 L1000 606"/>
        <path d="M715 693.6 L800 680 L860 672 L919 662.8"/>
        <path d="M1064 580 L1110 571 L1180 557 L1245 546 L1300 536"/>
        <path d="M1064 600 L1130 586 L1200 571 L1270 556 L1300 550"/>
        <path d="M1066 622 L1120 610 L1190 594 L1250 580 L1300 568"/>
        <path d="M924 701 L1000 683.4 L1024 678 L1100 660.6"/>
        <path d="M928 712.6 L996 697 L1060 682.4 L1120 668.4 L1150 662"/>
        <path d="M1097 702.6 L1159 688.6 L1244.6 665.2 L1297 652.8"/>
        <path d="M1097 724.2 L1170 708 L1244.6 692 L1297 681"/>
        <path d="M934 740 L1000 724.6 L1042 715"/>
        <path d="M719 708 L760 700 M719 590 L760 572 L818 545 M719 602 L745 590"/>
        <path d="M840 745 L870 736 L930 722"/>
        <path d="M930 524 Q960 530 975 543 L1020 571 L1047 590 L1059 612"/>
        <path d="M1020 571 L1033 548 L1046 541 L1053 541"/>
        <path d="M972 549 L1008 538"/>
        <path d="M940 516 L952 523 L1030 524.6 L1046 531 L1052 536"/>
      </g>
      <!-- cross streets -->
      <g stroke-width="2.4">
        <path d="M1128 611 L1146 680 L1163 745"/>
        <path d="M1182.4 623.4 L1198 673.4"/>
        <path d="M1212 615.6 L1226 745"/>
        <path d="M1261.6 604 L1273 745"/>
        <path d="M1079 580 L1084 602 L1091 640"/>
        <path d="M1157 550 L1163 570 L1172 600 L1178 622"/>
        <path d="M1188 526 L1196 560 L1204 590 L1212 615"/>
        <path d="M1222 550 L1226 578"/>
        <path d="M1241 530 Q1246 526 1256 528 L1272 538 L1280 548 M1244 532 L1250 560 L1256 584"/>
        <path d="M1024 660 L1040 715 L1046 745"/>
        <path d="M996 700 L1006 730"/>
        <path d="M954 710 L962 745"/>
        <path d="M1100 660 L1110 700 L1120 745"/>
        <path d="M1176 692 L1186 745"/>
        <path d="M728 664 L735 690 L748 745"/>
        <path d="M743 694 L752 745"/>
        <path d="M806 645 L812 668 L820 700"/>
        <path d="M852 600 L860 630 L866 660 L876 700"/>
        
        <path d="M760 548 L764 575"/>
        <path d="M753 614 L820 600 L850 598 Q868 600 878 612 M753 614 L756 640"/>
        <path d="M770 632 L775 610 L782 608 L786 630 M800 627 L798 606 M812 624 L810 604 L832 600 L836 622"/>
        <path d="M740 628 L748 626 L752 648"/>
        <path d="M1116 553 L1118 566 L1135 563 L1133 550 Z"/>
        <path d="M946 586 L948 603 L1000 596 L1003 612 L960 620 L956 610"/>
        <path d="M985 557 L1000 563 L1010 574"/>
        <path d="M900 660 L908 700 M1008 612 L1012 624 L1030 620"/>
      </g>
    </g>
    <!-- park paths -->
    <g stroke="#66b877" stroke-width=".8" fill="none">
      <path d="M719 541 L774 530.4 L830 520.6 L880 512.6"/>
      <path d="M724 553 Q740 548 746 543 L750 546"/>
      <path d="M764 580 Q800 560 830 538 L840 532"/>
      <path d="M778 577 L800 571 Q830 572 850 568 L870 566 L898 567"/>
      <path d="M788 575 L790 588 M850 568 L846 584 M836 568 L860 586"/>
      <path d="M822 537 Q826 556 852 568 M818 544 L826 549 L840 535 L832 532"/>
      <path d="M848 541 L905 528 M905 522 L905 529"/>
      <path d="M866 596 L864 612 L870 620 M866 596 L884 616 M864 612 L872 606"/>
      <path d="M880 544 Q872 560 868 580" />
      <path d="M970 550 L984 560 L1019 570"/>
      <path d="M999.6 594.4 L1040.6 585"/>
      <path d="M1003 594 L1014 612 Q1024 606 1026 594 L1030 620 L1041 617 L1036 596 L1026 598"/>
      <path d="M1018 614 L1022 624"/>
      <path d="M1193 620.6 L1198 640 L1200 671 M1190 648 L1214 642"/>
      <ellipse cx="1203" cy="645" rx="4.6" ry="5.6"/>
      <path d="M1202 651 L1201 662 L1207 668 L1205 655"/>
      <path d="M1146 669 L1176 663 M1172 650 L1180 678 M1150 676 L1154 683"/>
      <path d="M1270 640 L1296 600 M1268 622 L1296 634 M1280 604 L1284 640"/>
      <circle cx="1275" cy="618" r="3"/>
      <path d="M1213 531 Q1220 540 1218 553"/>
      <path d="M731 692 Q726 706 740 722"/>
      <path d="M1014 632 L1024 630 L1028 652 M1022 640 L1062 632 L1064 648 M1030 646 L1060 638 M1040 636 L1042 646 M1050 634 L1052 644"/>
    </g>
    <g stroke="#57b26c" stroke-width=".9" fill="none" stroke-dasharray="3 2.2">
      <path d="M1060 527 L1100 527 M1060 538 Q1090 546 1110 536 L1160 533 L1196 524 L1204 524"/>
      <path d="M1130 547 L1140 541 L1150 544"/>
      <path d="M886 558 Q900 550 914 566 M900 555 Q908 572 924 580 Q940 590 948 575 Q940 562 921 566"/>
      <path d="M868 560 L880 556 L892 549"/>
    </g>
    <!-- ferry dashes -->
    <g stroke="#6fa0f0" stroke-width="1" fill="none" stroke-dasharray="4.5 3">
      <path d="M720 378 L1000 416 L1296 471.4"/>
      <path d="M750 321 L921 498"/>
      <path d="M806 321 L1000 406 L1128 464 Q1146 472 1148 460 L1116 321"/>
    </g>
    <!-- road labels -->
    <g fill="#5f6368" font-size="10.6">
      <text transform="translate(779 653) rotate(-13.5)" text-anchor="middle">Lundagatan</text>
      <text transform="translate(957 648.6) rotate(-13.5)" text-anchor="middle">Brännkyrkagatan</text>
      <text transform="translate(1108.6 612.6) rotate(-15)" text-anchor="middle">Brännkyrkagatan</text>
      <text transform="translate(1086 568) rotate(-6)" text-anchor="middle">Bastugatan</text>
      <text transform="translate(1162 560) rotate(-9)" text-anchor="middle">Bastugatan</text>
      <text transform="translate(1171.6 579) rotate(-11)" text-anchor="middle">Tavastgatan</text>
      <text transform="translate(1198 682.6) rotate(-13.5)" text-anchor="middle">Sankt Paulsgatan</text>
      <text transform="translate(1151 700) rotate(77)">Timme</text>
      <text transform="translate(719 583) rotate(-10)">gatan</text>
      <text transform="translate(1285.6 599.6) rotate(-13)" font-size="12.4" fill="#3c4043">rn</text>
    </g>
    <g fill="#3c4043" font-size="12.6" stroke="#fff" stroke-width="2.4" paint-order="stroke" stroke-linejoin="round">
      <text transform="translate(828 532.6) rotate(-9.8)" text-anchor="middle" font-size="12.4">Söder Mälarstrand</text>
      <text transform="translate(955 680) rotate(-12.8)" text-anchor="middle">Hornsgatan</text>
      <text transform="translate(1129 640.8) rotate(-13)" text-anchor="middle">Hornsgatan</text>
      <text transform="translate(720 736.4) rotate(-13.6)" font-size="12.4">rnsgatan</text>
    </g>
    <text x="1171" y="614.4" font-size="12.6" fill="#fff" stroke="#fff" stroke-width="2.4" stroke-linejoin="round" textLength="80" lengthAdjust="spacing">ROSENDAL</text>
    <text x="1171" y="614.4" font-size="12.6" fill="#4a4f55" stroke="#4a4f55" stroke-width=".35" textLength="80" lengthAdjust="spacing">ROSENDAL</text>
    <!-- POI labels -->
    <g stroke="#fff" stroke-width="2.4" paint-order="stroke" stroke-linejoin="round" font-size="13.4">
      <text x="797.4" y="558" fill="#12808f" textLength="110" lengthAdjust="spacingAndGlyphs">Skinnarviksberget</text>
      <text x="808" y="595.4" fill="#1e8e3e" textLength="112.6" lengthAdjust="spacingAndGlyphs">Skinnarviksparken</text>
      <text x="1114.6" y="517.2" fill="#12808f" textLength="74" lengthAdjust="spacingAndGlyphs">Mariaberget</text>
      <text x="1219.2" y="569.6" fill="#12808f" textLength="88" lengthAdjust="spacingAndGlyphs">Stadsmuseet</text>
      <text x="817.4" y="670" fill="#3d7ae0" textLength="81.6" lengthAdjust="spacingAndGlyphs">Zinkensdamm</text>
      <text x="792.2" y="717.4" fill="#1e8e3e" textLength="111.8" lengthAdjust="spacingAndGlyphs" font-size="14">Zinkensdamms IP</text>
      <text x="1009.6" y="690.4" fill="#3d7ae0" textLength="66.6" lengthAdjust="spacingAndGlyphs">Mariatorget</text>
      <text x="1235" y="428.6" fill="#3b78e0" textLength="62" lengthAdjust="spacingAndGlyphs" stroke="#dfeaff" stroke-opacity=".7" stroke-width="1.8">Gamla stan</text>
      <text x="719.4" y="571.6" fill="#1e8e3e">n</text>
      <text x="1110" y="334.8" fill="#70757a" textLength="119" lengthAdjust="spacingAndGlyphs" font-size="13.2">Riddarholmskyrkan</text>
      <text x="1153.6" y="347" fill="#70757a" textLength="75.6" lengthAdjust="spacingAndGlyphs" font-size="10.4">Tillfälligt stängt</text>
    </g>
    <text x="1235" y="428.6" fill="#3b78e0" stroke="#3b78e0" stroke-width=".3" font-size="13.4" textLength="62" lengthAdjust="spacingAndGlyphs">Gamla stan</text>
    <text x="719.6" y="647" fill="#5f6368" font-size="11">n</text>
    <!-- T icons -->
    <g fill="#fff" stroke="#3d7ae0" stroke-width="1.2"><circle cx="907" cy="666.2" r="5.2"/><circle cx="1084.2" cy="686.2" r="5.4"/></g>
    <path d="M904.4 663.6 H909.6 M907 663.6 V669.2 M1081.6 683.6 H1086.8 M1084.2 683.6 V689.2" stroke="#3d7ae0" stroke-width="1.5" fill="none"/>
    <!-- ferry icons -->
    <g id="ferry">
      <rect x="914.8" y="497.8" width="13.4" height="13.2" rx="2.6" fill="#1a73e8" stroke="#fff" stroke-width=".6"/>
      <path d="M919.8 500.2 H923.2 V501.6 H924.4 V504 L925.4 504.4 L924.6 506.6 H918.4 L917.6 504.4 L918.6 504 V501.6 H919.8 Z" fill="#fff"/>
      <path d="M919.6 502.6 H923.4" stroke="#1a73e8" stroke-width=".8"/>
      <path d="M917.2 507.6 H925.8 M917.8 509.2 H925.2" stroke="#fff" stroke-width=".9"/>
    </g>
    <use href="#ferry" transform="translate(281.2 -124.4)"/>
    <!-- camera pins -->
    <g id="campin">
      <path d="M920.7 567.4 Q918.6 561.6 913.4 555.4 A9.9 9.9 0 1 1 928 555.4 Q922.8 561.6 920.7 567.4 Z" fill="#12b5cb" stroke="#fff" stroke-width=".8"/>
      <path d="M915.6 545.4 H918.4 L919.4 544 H923 L924 545.4 H925.8 Q926.6 545.4 926.6 546.2 V551.4 Q926.6 552.2 925.8 552.2 H915.6 Q914.8 552.2 914.8 551.4 V546.2 Q914.8 545.4 915.6 545.4 Z" fill="#fff"/>
      <circle cx="921.2" cy="548.8" r="2.1" fill="#12b5cb"/>
      <path d="M914.6 542.4 V545 M913.3 543.7 H915.9" stroke="#fff" stroke-width=".9"/>
    </g>
    <use href="#campin" transform="translate(281.9 -40.7)"/>
    <!-- church pin -->
    <path d="M1241.6 350 Q1239.6 343.4 1234.6 337 A9.3 9.3 0 1 1 1248.6 337 Q1243.6 343.4 1241.6 350 Z" fill="#9aa0a6" stroke="#fff" stroke-width=".7"/>
    <path d="M1241.6 324.2 V336.4 M1237.8 328 H1245.4" stroke="#fff" stroke-width="1.5"/>
    <!-- green reception marker -->
    <circle cx="1008.1" cy="532.3" r="14.6" fill="#fff"/>
    <circle cx="1008.1" cy="532.3" r="13.4" fill="#389a31"/>
    <circle cx="1008.1" cy="524.6" r="1.7" fill="#fff"/>
    <path d="M1004.6 531 Q1004.6 527.2 1008.1 527.2 Q1011.6 527.2 1011.6 531 Z M998.6 531.4 H1017.6 L1016.6 533.4 V540 H999.6 V533.4 Z" fill="#fff"/>
    <path d="M1006.6 531 V529 M1009.6 531 V529" stroke="#389a31" stroke-width=".5"/>
    <!-- green pin -->
    <path d="M917.6 727.4 Q915.4 721 910 714.6 A10 10 0 1 1 925.2 714.6 Q919.8 721 917.6 727.4 Z" fill="#34a853" stroke="#fff" stroke-width=".7"/>
    <circle cx="917.6" cy="708.2" r="3.5" fill="#fff"/>
    <!-- attribution -->
    <rect x="860" y="731.4" width="437" height="14" fill="#f5f5f5" fill-opacity=".75"/>
    <g font-size="10" fill="#222">
      <text x="863.2" y="739.6" textLength="73.4" lengthAdjust="spacingAndGlyphs">Kortkommandon</text>
      <text x="950" y="739.6" textLength="105" lengthAdjust="spacingAndGlyphs">Kartdata ©2024 Google</text>
      <text x="1067.2" y="739.6" textLength="27.2" lengthAdjust="spacingAndGlyphs">100 m</text>
      <text x="1154.8" y="739.6" textLength="27.4" lengthAdjust="spacingAndGlyphs">Villkor</text>
      <text x="1194.4" y="739.6" textLength="94.4" lengthAdjust="spacingAndGlyphs">Rapportera ett kartfel</text>
    </g>
    <path d="M1100 734.4 V739.4 H1141.4 V734.4" stroke="#444" stroke-width="1.6" fill="none"/>
    <!-- Google logo -->
    <g font-size="17.4" stroke="#fff" stroke-width="2" paint-order="stroke" letter-spacing="-.1">
      <text x="730.4" y="735"><tspan fill="#4285f4">G</tspan><tspan fill="#ea4335">o</tspan><tspan fill="#fbbc05">o</tspan><tspan fill="#4285f4">g</tspan><tspan fill="#34a853">l</tspan><tspan fill="#ea4335">e</tspan></text>
    </g>
  </svg>
  <!-- map type control -->
  <div class="abs" style="left:10px;top:10px;width:166px;height:40px;background:#fff;border-radius:2px;box-shadow:0 1px 4px rgba(0,0,0,.3)"></div>
  <div class="abs" style="left:87px;top:10px;width:1px;height:40px;background:#e6e6e6"></div>
  <!-- pegman -->
  <div class="abs" style="left:525.4px;top:246px;width:40px;height:40px;background:#fff;border-radius:2px;box-shadow:0 1px 4px rgba(0,0,0,.3)"></div>
  <svg class="abs" style="left:525.4px;top:246px" width="40" height="40" viewBox="0 0 40 40">
    <circle cx="19.6" cy="10.4" r="5" fill="#fbbc24"/>
    <path d="M13.4 17.4 Q13.4 16 15 16 H24.4 Q26 16 26 17.4 L27.6 27 L25 27.6 L24 23 L23.4 36 H20.4 L19.7 28 L19 36 H16 L15.4 23 L14.4 27.6 L11.8 27 Z" fill="#fbbc24" stroke="#e0961a" stroke-width=".5"/>
    <path d="M16.2 16 L19.7 21.6 L23.2 16 Z" fill="#e8711a"/>
  </svg>
  <!-- zoom -->
  <div class="abs" style="left:525.4px;top:318.6px;width:40px;height:80.6px;background:#fff;border-radius:2px;box-shadow:0 1px 4px rgba(0,0,0,.3)"></div>
  <div class="abs" style="left:530.4px;top:358.6px;width:30px;height:1px;background:#e6e6e6"></div>
  <svg class="abs" style="left:525.4px;top:318.6px" width="40" height="81" viewBox="0 0 40 81"><path d="M11 19.6 H29 M20 10.6 V28.6 M11 60.6 H29" stroke="#666" stroke-width="3.2"/></svg>
  </div>
  <span class="t" style="left:747.4px;top:341.6px;font-size:18px;color:#111;letter-spacing:-0.086px;-webkit-text-stroke:.45px #111">Karta</span>
  <span class="t" style="left:824.6px;top:341.6px;font-size:18px;color:#565656;letter-spacing:0.096px">Satellit</span>

  <!-- ============ IMAGE PANEL ============ -->
  <div class="abs" style="left:719px;top:759px;width:578px;height:154px;border-radius:15px;background:#fff;border:1px solid #dcdcdc;overflow:hidden">
    <!-- thumbnail (panel-local coords: window - (720,760)) -->
    <svg class="abs" style="left:0;top:5px" width="131" height="99" viewBox="720 765 131 99">
      <defs>
        <linearGradient id="sky" x1="0" y1="0" x2="0" y2="1"><stop offset="0" stop-color="#5d8dcc"/><stop offset=".45" stop-color="#8fb1da"/><stop offset=".8" stop-color="#c4d3e2"/><stop offset="1" stop-color="#d9dfe3"/></linearGradient>
        <linearGradient id="sky2" x1="0" y1="0" x2="1" y2="0"><stop offset="0" stop-color="#4f82c6" stop-opacity=".55"/><stop offset=".5" stop-color="#7aa6dc" stop-opacity=".2"/><stop offset="1" stop-color="#8fb8e6" stop-opacity=".5"/></linearGradient>
        <linearGradient id="snow" x1="0" y1="0" x2="0" y2="1"><stop offset="0" stop-color="#dde2ec"/><stop offset=".35" stop-color="#c9d2e2"/><stop offset="1" stop-color="#aebbd3"/></linearGradient>
        <filter id="blr" x="-20%" y="-20%" width="140%" height="140%"><feGaussianBlur stdDeviation="2.2"/></filter>
        <clipPath id="thc"><path d="M720 765 H851 V864 H728 Q720 864 720 856 Z"/></clipPath>
      </defs>
      <g clip-path="url(#thc)">
        <rect x="720" y="765" width="131" height="50" fill="url(#sky)"/>
        <rect x="720" y="765" width="131" height="36" fill="url(#sky2)"/>
        <!-- cloud streaks radiating from (792,811) -->
        <g fill="#e9eef4" filter="url(#blr)" opacity=".85">
          <path d="M792 811 L716 776 L716 792 Z" opacity=".7"/>
          <path d="M792 811 L716 794 L716 814 Z" opacity=".85"/>
          <path d="M792 811 L726 761 L746 761 Z" opacity=".55"/>
          <path d="M792 811 L752 761 L764 761 Z" opacity=".4"/>
          <path d="M800 811 L855 794 L855 808 Z" opacity=".8"/>
          <ellipse cx="782" cy="808" rx="44" ry="6" opacity=".7"/>
          <ellipse cx="745" cy="800" rx="30" ry="7" opacity=".45"/>
          <ellipse cx="738" cy="808" rx="34" ry="6" fill="#aeb9c6" opacity=".75"/>
        </g>
        <rect x="720" y="814" width="131" height="50" fill="url(#snow)"/>
        <!-- treeline -->
        <path d="M795 813.6 L799 812.4 L804 812.2 L808 811.4 L812 811.6 L816 810.6 L820 810.8 L824 809.8 L828 810.2 L832 809 L836 809.4 L840 808.2 L844 808.6 L847 807.4 L851 807.6 V813.2 L840 813.6 L820 814.2 H795 Z" fill="#243236"/>
        <path d="M720 813.8 H795" stroke="#66768c" stroke-width="1"/>
        <!-- snow tracks -->
        <g stroke="#a3b0c8" stroke-width=".7" opacity=".55" fill="none">
          <path d="M790 816 L760 864 M792 816 L776 864 M794 816 L792 864 M796 816 L806 864 M798 816 L820 864 M800 816 L836 864 M803 816 L851 858 M806 816 L851 846 M810 816 L851 836"/>
          <path d="M788 816 L744 864 M785 816 L728 864 M782 816 L720 856 M776 816 L720 842"/>
        </g>
        <g stroke="#eef1f7" stroke-width="1" opacity=".55" fill="none">
          <path d="M770 818 L724 831 M793 818 L784 864 M797 818 L812 864 M801 818 L844 864"/>
        </g>
      </g>
      <rect x="780" y="765" width="35.2" height="35" fill="#333"/>
      <rect x="815.2" y="765" width="35.8" height="35" fill="#e94f5f"/>
      <path d="M796.2 780.4 H799.8 V786 H802.4 L798 791.2 L793.6 786 H796.2 Z" fill="none" stroke="#fff" stroke-width="1.3" stroke-linejoin="round"/>
      <path d="M828.6 780.6 L838 790 M838 780.6 L828.6 790" stroke="#fff" stroke-width="2.4"/>
    </svg>
    <!-- dropzone -->
    <div class="abs" style="left:4px;top:106px;width:568.6px;height:42px;border-radius:13px;background:#e6e6e6;border:1px dotted #000"></div>
  </div>
  <span class="t" style="left:860.0px;top:881.1px;font-size:13.6px;color:#444;letter-spacing:0.316px">Klicka och välj eller drag och släpp bilder här...</span>
  <!-- red highlight -->
  <div class="abs" style="left:711px;top:756px;width:149px;height:117px;border:3px solid #fe0000"></div>
  <!-- cursor -->
  <svg class="abs" style="left:778.6px;top:803.6px" width="20.4" height="25.5" viewBox="0 0 24 30">
    <path d="M5.4 5.4 V22.6 L9.4 18.8 L12.4 25.6 L15.4 24.2 L12.4 17.6 H17.8 Z" fill="#000" opacity=".25" transform="translate(1.6 1.6)"/>
    <path d="M4.4 4.2 V21.4 L8.4 17.6 L11.4 24.4 L14.4 23 L11.4 16.4 H16.8 Z" fill="#fff" stroke="#111" stroke-width="1"/>
  </svg>
  <!-- resize grip -->
  <svg class="abs" style="left:1329px;top:902px" width="18" height="18" viewBox="0 0 18 18"><path d="M2.2 14.8 L14.6 2.6 M8.4 15.4 L15.2 8.4" stroke="#c6c6c6" stroke-width="1.1"/></svg>

  <!-- left scroll -->
  <div class="abs" style="left:695.5px;top:320px;width:10px;height:592px;background:#efefef;border-radius:5px"></div>
  <div class="abs" style="left:695.5px;top:320px;width:9.6px;height:187px;border-radius:5px;background:#999"></div>
</div>

<!-- window frame -->
<svg class="abs" style="left:0;top:0;pointer-events:none" width="1449" height="966" viewBox="0 0 1449 966" fill="none">
  <path d="M0 0 H1449 V966 H0 Z M1 8 V957 Q1 965 9 965 H1440 Q1448 965 1448 957 V8 Q1448 1 1441 1 H8 Q1 1 1 8 Z" fill="#c6c6c6" fill-rule="evenodd"/>
  <path d="M1.2 8 Q1.5 1.5 8 1.5 H1441 Q1447.5 1.5 1447.8 8" stroke="#4e4e4e" stroke-width="1" opacity=".8"/>
  <path d="M1448.5 22 V960" stroke="#5b6a82" stroke-width="1" opacity=".8"/>
  <path d="M1441 41 H1448 V48 Q1448 41 1441 41 Z" fill="#d3e3fd"/>
  <path d="M8 41 H1 V48 Q1 41 8 41 Z" fill="#d3e3fd"/>
</svg>

</div>
</body>
</html>
